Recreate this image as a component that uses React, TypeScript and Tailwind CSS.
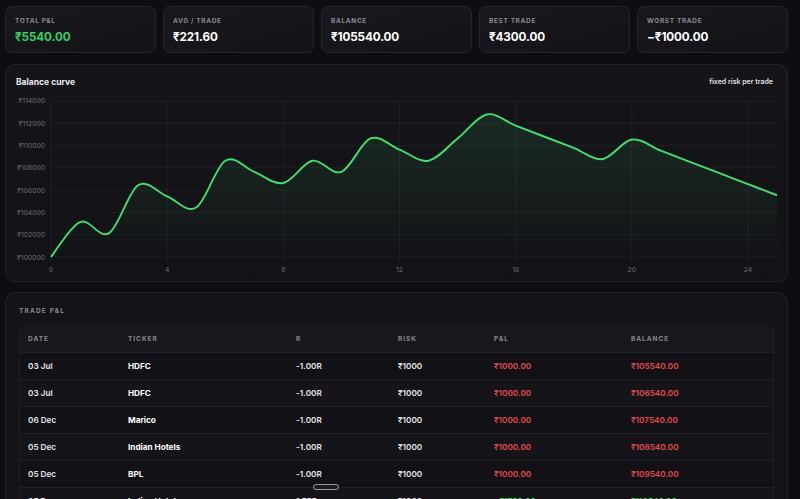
import React from 'react';

const balances = [
  100000, 103140, 102140, 106440, 105440, 104440, 108640, 107640, 106640, 108640,
  107640, 110640, 109640, 108640, 110640, 112790, 111790, 110790, 109790, 108790,
  110540, 109540, 108540, 107540, 106540, 105540,
];

const stats = [
  { label: 'Total P&L', value: '₹5540.00', green: true },
  { label: 'Avg / Trade', value: '₹221.60' },
  { label: 'Balance', value: '₹105540.00' },
  { label: 'Best Trade', value: '₹4300.00' },
  { label: 'Worst Trade', value: '−₹1000.00' },
];

const trades = [
  { date: '03 Jul', ticker: 'HDFC', r: '-1.00R', risk: '₹1000', pnl: '₹1000.00', bal: '₹105540.00', win: false },
  { date: '03 Jul', ticker: 'HDFC', r: '-1.00R', risk: '₹1000', pnl: '₹1000.00', bal: '₹106540.00', win: false },
  { date: '06 Dec', ticker: 'Marico', r: '-1.00R', risk: '₹1000', pnl: '₹1000.00', bal: '₹107540.00', win: false },
  { date: '05 Dec', ticker: 'Indian Hotels', r: '-1.00R', risk: '₹1000', pnl: '₹1000.00', bal: '₹108540.00', win: false },
  { date: '05 Dec', ticker: 'BPL', r: '-1.00R', risk: '₹1000', pnl: '₹1000.00', bal: '₹109540.00', win: false },
  { date: '05 Dec', ticker: 'Indian Hotels', r: '1.75R', risk: '₹1000', pnl: '+₹1750.00', bal: '₹110540.00', win: true },
];

// svg origin sits at page (6, 87)
const OX = 6;
const OY = 87;
const px = (i: number) => 51 + 29.04 * i - OX;
const py = (v: number) => 257 - ((v - 100000) / 2000) * 22.29 - OY;

function curvePath(pts: [number, number][]) {
  let d = `M${pts[0][0]},${pts[0][1]}`;
  for (let i = 0; i < pts.length - 1; i++) {
    const p0 = pts[i - 1] || pts[i];
    const p1 = pts[i];
    const p2 = pts[i + 1];
    const p3 = pts[i + 2] || p2;
    const c1x = p1[0] + (p2[0] - p0[0]) / 6;
    const c1y = p1[1] + (p2[1] - p0[1]) / 6;
    const c2x = p2[0] - (p3[0] - p1[0]) / 6;
    const c2y = p2[1] - (p3[1] - p1[1]) / 6;
    d += ` C${c1x},${c1y} ${c2x},${c2y} ${p2[0]},${p2[1]}`;
  }
  return d;
}

function BalanceChart() {
  const pts = balances.map((b, i) => [px(i), py(b)] as [number, number]);
  const line = curvePath(pts);
  const base = py(100000);
  const area = `${line} L${pts[pts.length - 1][0]},${base} L${pts[0][0]},${base} Z`;
  const yTicks = [100000, 102000, 104000, 106000, 108000, 110000, 112000, 114000];
  const xTicks = [0, 4, 8, 12, 16, 20, 24];
  const right = 777 - OX;

  return (
    <svg width={781} height={194} viewBox="0 0 781 194" className="block">
      <defs>
        <linearGradient id="fill" x1="0" y1="0" x2="0" y2="1">
          <stop offset="0%" stopColor="#3ee070" stopOpacity={0.11} />
          <stop offset="100%" stopColor="#3ee070" stopOpacity={0} />
        </linearGradient>
      </defs>
      {yTicks.map((t) => (
        <g key={t}>
          <line x1={px(0)} x2={right} y1={py(t)} y2={py(t)} stroke="#ffffff" strokeOpacity={0.05} />
          <text x={45 - OX} y={py(t) + 2.5} textAnchor="end" fontSize={6.8} fill="#6c6c75">
            ₹{t}
          </text>
        </g>
      ))}
      {xTicks.map((t) => (
        <g key={t}>
          <line x1={px(t)} x2={px(t)} y1={py(114000)} y2={py(100000) + 5} stroke="#ffffff" strokeOpacity={0.05} />
          <text x={px(t)} y={271.5 - OY} textAnchor="middle" fontSize={6.8} fill="#6c6c75">
            {t}
          </text>
        </g>
      ))}
      <path d={area} fill="url(#fill)" />
      <path d={line} fill="none" stroke="#3ee070" strokeWidth={1.9} strokeLinejoin="round" />
    </svg>
  );
}

export default function App() {
  return (
    <div
      className="relative min-h-[499px] h-[499px] overflow-hidden bg-[#0e0e12] pl-[5px] pr-[12px] pt-[6px] text-white"
      style={{ fontFamily: 'Inter, "Noto Sans", sans-serif' }}
    >
      <div className="grid grid-cols-5 gap-[7px]">
        {stats.map((s) => (
          <div
            key={s.label}
            className="h-[47px] rounded-[7px] border border-[#24242b] bg-gradient-to-br from-[#18181e] to-[#131318] pl-[9px] pt-[10px]"
          >
            <div className="text-[6.5px] font-bold uppercase leading-[8px] tracking-[0.1em] text-[#8a8a93]">{s.label}</div>
            <div className={`mt-[5px] text-[11.7px] font-bold leading-[15px] tracking-[-0.01em] ${s.green ? 'text-[#2fd160]' : 'text-white'}`}>
              {s.value}
            </div>
          </div>
        ))}
      </div>

      <div className="mt-[11px] h-[218px] rounded-[10px] border border-[#22222a] bg-gradient-to-b from-[#151519] to-[#131317]">
        <div className="flex items-center justify-between px-[10px] pt-[11px] h-[22px]">
          <span className="text-[8.5px] font-bold leading-[12px] text-[#ececef]">Balance curve</span>
          <span className="mr-[4px] text-[7px] font-semibold leading-[12px] text-[#e0e0e4]">fixed risk per trade</span>
        </div>
        <BalanceChart />
      </div>

      <div className="mt-[10px] rounded-[10px] border border-[#22222a] bg-[#141418] px-[13px] pt-[13px] pb-4">
        <div className="text-[6.5px] font-bold uppercase leading-[10px] tracking-[0.18em] text-[#8a8a93]">Trade P&amp;L</div>
        <div className="mt-[10px] overflow-hidden rounded-[6px] border border-[#202027]">
          <div className="grid h-[25px] grid-cols-[100px_168px_102px_96px_137px_151px] items-center bg-[#17171c] text-[6.5px] font-bold uppercase tracking-[0.15em] text-[#8a8a93]">
            <span className="pl-[8px]">Date</span>
            <span className="pl-[8px]">Ticker</span>
            <span className="pl-[8px]">R</span>
            <span className="pl-[8px]">Risk</span>
            <span className="pl-[8px]">P&amp;L</span>
            <span className="pl-[8px]">Balance</span>
          </div>
          {trades.map((t, i) => (
            <div
              key={i}
              className={`grid h-[27px] grid-cols-[100px_168px_102px_96px_137px_151px] items-center border-t border-[#202027] text-[8.2px] font-semibold ${i % 2 ? 'bg-[#151519]' : 'bg-[#121216]'}`}
            >
              <span className="pl-[8px] text-[#e4e4e7]">{t.date}</span>
              <span className="pl-[8px] font-bold text-white">{t.ticker}</span>
              <span className="pl-[8px] text-[#e4e4e7]">{t.r}</span>
              <span className="pl-[8px] text-[#e4e4e7]">{t.risk}</span>
              <span className={`pl-[8px] ${t.win ? 'text-[#2fd160]' : 'text-[#e5484d]'}`}>{t.pnl}</span>
              <span className={`pl-[8px] ${t.win ? 'text-[#2fd160]' : 'text-[#e5484d]'}`}>{t.bal}</span>
            </div>
          ))}
        </div>
      </div>

      <div className="absolute left-[313px] top-[484px] h-[6px] w-[26px] rounded-full border border-[#9a9aa2] bg-[#1a1a1f]" />
    </div>
  );
}
